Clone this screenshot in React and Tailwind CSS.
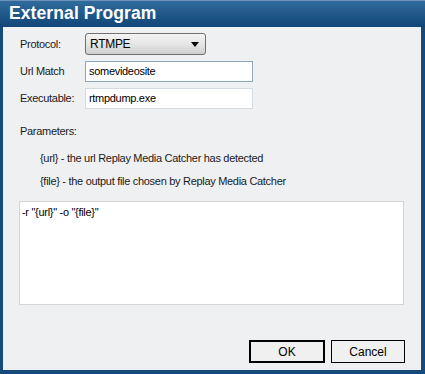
import React from "react";

const font = { fontFamily: '"Liberation Sans", Arial, sans-serif' };

const Field = ({ value, dark }) => (
  <div
    className={`w-[168px] h-[21px] bg-white border flex items-center px-[3px] text-[11px] text-black ${
      dark ? "border-[#8fa6bf]" : "border-[#d5dbe2]"
    }`}
  >
    {value}
  </div>
);

export default function App() {
  return (
    <div
      className="w-[425px] h-[374px] bg-[#17497a] flex flex-col overflow-hidden"
      style={font}
    >
      {/* title bar */}
      <div className="h-[27px] shrink-0 border-t border-[#6f93b8] bg-gradient-to-b from-[#2f6c9c] to-[#124578] flex items-center pl-[9px]">
        <span className="text-white font-bold text-[17.5px] tracking-[0.1px] leading-none">
          External Program
        </span>
      </div>

      <div className="flex-1 ml-[3px] mr-[4px] mb-[4px] bg-[#eff0f2] text-[11px] text-[#1a1a1a] tracking-[-0.3px] pl-[17px] flex flex-col">
        {/* Protocol */}
        <div className="flex items-center mt-[6px] h-[22px]">
          <div className="w-[65px]">Protocol:</div>
          <div className="w-[121px] h-[22px] rounded-[3px] border border-[#707070] bg-gradient-to-b from-[#f4f4f4] via-[#e6e6e6] to-[#cfcfcf] flex items-center justify-between pl-[4px] pr-[6px] text-[12px] text-black">
            <span>RTMPE</span>
            <svg width="8" height="5" viewBox="0 0 8 5">
              <path d="M0 0H8L4 5Z" fill="#000" />
            </svg>
          </div>
        </div>

        {/* Url Match */}
        <div className="flex items-center mt-[6px]">
          <div className="w-[65px]">Url Match</div>
          <Field value="somevideosite" dark />
        </div>

        {/* Executable */}
        <div className="flex items-center mt-[6px]">
          <div className="w-[65px]">Executable:</div>
          <Field value="rtmpdump.exe" />
        </div>

        <div className="mt-[16px] h-[12px] leading-[12px]">Parameters:</div>
        <div className="mt-[15px] ml-[20px] h-[12px] leading-[12px]">
          {"{url} - the url Replay Media Catcher has detected"}
        </div>
        <div className="mt-[11px] ml-[20px] h-[12px] leading-[12px]">
          {"{file} - the output file chosen by Replay Media Catcher"}
        </div>

        {/* textarea */}
        <div className="mt-[14px] -ml-[1px] w-[385px] h-[104px] bg-white border border-[#d6d6d6] px-[2px] pt-[2px] text-black">
          {'-r "{url}" -o "{file}"'}
        </div>

        {/* buttons */}
        <div className="mt-auto mb-[7px] flex justify-end gap-[6px] pr-[16px] tracking-normal">
          <button className="w-[76px] h-[23px] border-2 border-black bg-[#f0f0f0] text-[12px] text-black">
            OK
          </button>
          <button className="w-[74px] h-[23px] border border-black bg-[#f0f0f0] text-[12px] text-black">
            Cancel
          </button>
        </div>
      </div>
    </div>
  );
}
